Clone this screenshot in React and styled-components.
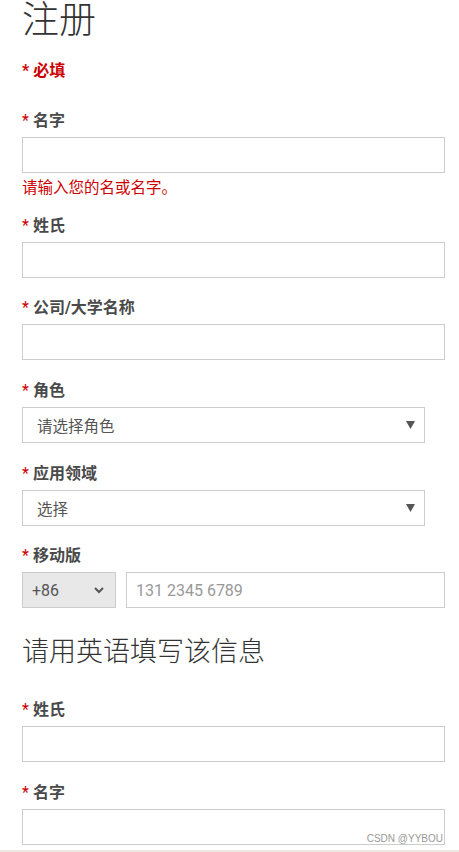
import React from 'react'
import styled, { createGlobalStyle } from 'styled-components'

const GlobalStyle = createGlobalStyle`
    body {
        margin: 0;
        background: #fff;
        font-family: Roboto, "Noto Sans CJK SC", sans-serif;
        color: #4a4a4a;
    }
`

const Page = styled.div`
    position: relative;
    width: 459px;
    height: 852px;
    box-sizing: border-box;
    padding: 1px 14px 0 22px;
    overflow: hidden;
`

const Title = styled.h1`
    margin: 0;
    font-size: 37px;
    line-height: 40px;
    font-weight: 300;
    color: #333;
`

const Required = styled.div`
    margin-top: 20px;
    font-size: 16px;
    line-height: 20px;
    font-weight: 700;
    color: #c00;
`

const Field = styled.div`
    margin-top: ${p => p.$gap || 20}px;
`

const Label = styled.label`
    display: block;
    font-size: 16px;
    line-height: 20px;
    font-weight: 700;
    color: #4a4a4a;
    margin-bottom: 6px;

    span {
        color: #c00;
        font-weight: 400;
        margin-right: 4px;
    }
`

const Input = styled.input`
    display: block;
    box-sizing: border-box;
    width: ${p => p.$width || '100%'};
    height: 36px;
    margin: 0;
    padding: 0 9px;
    border: 1px solid #ccc;
    border-radius: 0;
    font-family: Roboto, "Noto Sans CJK SC", sans-serif;
    font-size: 16px;
    color: #555;
    outline: none;

    &::placeholder {
        color: #999;
    }
`

const Error = styled.div`
    margin-top: 5px;
    font-size: 15.5px;
    line-height: 20px;
    color: #c00;
`

const SelectBox = styled.div`
    display: flex;
    align-items: center;
    justify-content: space-between;
    box-sizing: border-box;
    width: 403px;
    height: 36px;
    padding: 0 9px 0 14px;
    border: 1px solid #ccc;
    font-size: 15.5px;
    color: #555;
`

const PhoneRow = styled.div`
    display: flex;
    gap: 10px;
`

const CodeBox = styled.div`
    display: flex;
    align-items: center;
    justify-content: space-between;
    box-sizing: border-box;
    width: 94px;
    height: 36px;
    flex-shrink: 0;
    padding: 0 11px 0 9px;
    background: #e8e8e8;
    border: 1px solid #ccc;
    font-size: 16px;
    color: #555;
`

const SubTitle = styled.h2`
    margin: 27px 0 0;
    font-size: 27px;
    line-height: 34px;
    font-weight: 300;
    color: #333;
`

const BottomLine = styled.div`
    position: absolute;
    left: 0;
    right: 0;
    bottom: 0;
    height: 2px;
    background: #efe7df;
`

const Watermark = styled.div`
    position: absolute;
    right: 16px;
    bottom: 8px;
    font-family: "Liberation Sans", Arial, sans-serif;
    font-size: 10px;
    color: #999;
`

function Triangle() {
    return (
        <svg width="9" height="8" viewBox="0 0 9 8">
            <path d="M0 0 H9 L4.5 8 Z" fill="#555" />
        </svg>
    )
}

function Chevron() {
    return (
        <svg width="10" height="7" viewBox="0 0 10 7">
            <path d="M1 1 L5 5 L9 1" fill="none" stroke="#555" strokeWidth="2" />
        </svg>
    )
}

function App() {
    return (
        <Page>
            <GlobalStyle />
            <Title>注册</Title>
            <Required>* 必填</Required>

            <Field $gap={30}>
                <Label><span>*</span>名字</Label>
                <Input />
                <Error>请输入您的名或名字。</Error>
            </Field>

            <Field $gap={18}>
                <Label><span>*</span>姓氏</Label>
                <Input />
            </Field>

            <Field>
                <Label><span>*</span>公司/大学名称</Label>
                <Input />
            </Field>

            <Field $gap={21}>
                <Label><span>*</span>角色</Label>
                <SelectBox>请选择角色<Triangle /></SelectBox>
            </Field>

            <Field $gap={21}>
                <Label><span>*</span>应用领域</Label>
                <SelectBox>选择<Triangle /></SelectBox>
            </Field>

            <Field>
                <Label><span>*</span>移动版</Label>
                <PhoneRow>
                    <CodeBox>+86<Chevron /></CodeBox>
                    <Input placeholder="131 2345 6789" />
                </PhoneRow>
            </Field>

            <SubTitle>请用英语填写该信息</SubTitle>

            <Field $gap={31}>
                <Label><span>*</span>姓氏</Label>
                <Input />
            </Field>

            <Field $gap={21}>
                <Label><span>*</span>名字</Label>
                <Input />
            </Field>

            <Watermark>CSDN @YYBOU</Watermark>
            <BottomLine />
        </Page>
    )
}

export default App
